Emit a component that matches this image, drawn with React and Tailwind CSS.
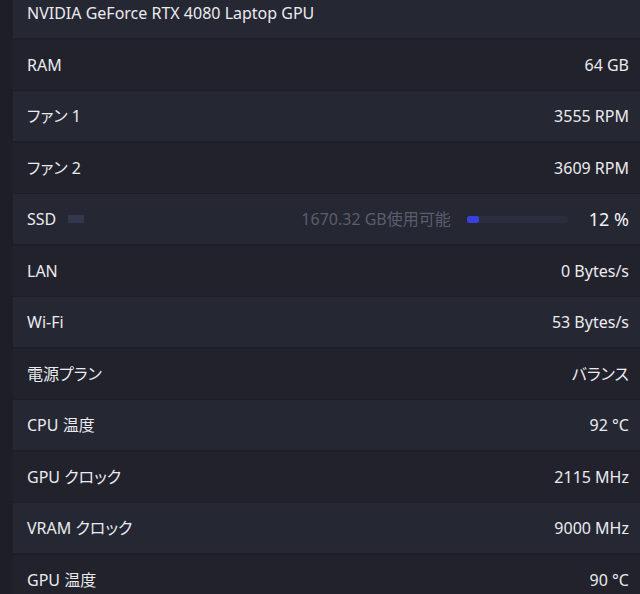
import React from 'react';

const ROWS = [
  { label: 'NVIDIA GeForce RTX 4080 Laptop GPU', value: '' },
  { label: 'RAM', value: '64 GB' },
  { label: 'ファン 1', value: '3555 RPM' },
  { label: 'ファン 2', value: '3609 RPM' },
  { label: 'SSD', ssd: true },
  { label: 'LAN', value: '0 Bytes/s' },
  { label: 'Wi-Fi', value: '53 Bytes/s' },
  { label: '電源プラン', value: 'バランス' },
  { label: 'CPU 温度', value: '92 °C' },
  { label: 'GPU クロック', value: '2115 MHz' },
  { label: 'VRAM クロック', value: '9000 MHz' },
  { label: 'GPU 温度', value: '90 °C' },
];

function SsdRight() {
  const used = 12;
  return (
    <div className="flex items-center">
      <span className="text-[#5b5e6c]">1670.32 GB使用可能</span>
      <div className="ml-4 h-[7px] w-[101px] rounded-[2px] bg-[#2b2e3e] overflow-hidden">
        <div className="h-full rounded-[2px] bg-[#3a40e0]" style={{ width: `${used}%` }} />
      </div>
      <span className="ml-[21px] text-[18px] text-[#f2f2f5]">{used} %</span>
    </div>
  );
}

export default function App() {
  return (
    <div
      className="h-[594px] w-[640px] overflow-hidden bg-[#1d1e26] pl-[13px] text-[16px] text-[#ebebef] [font-feature-settings:'palt']"
      style={{ fontFamily: '"Noto Sans", "Noto Sans CJK JP", sans-serif' }}
    >
      <div className="-mt-[12px] flex flex-col gap-[1.5px]">
        {ROWS.map((row, i) => (
          <div
            key={row.label}
            className={`flex h-[50px] shrink-0 items-center justify-between pl-[14px] pr-[11px] ${
              i % 2 === 0 ? 'bg-[#252733]' : 'bg-[#21222c]'
            }`}
          >
            <div className="flex items-center">
              <span>{row.label}</span>
              {row.ssd && <span className="ml-[12px] h-[8px] w-[16px] bg-[#32374d]" />}
            </div>
            {row.ssd ? <SsdRight /> : <span>{row.value}</span>}
          </div>
        ))}
      </div>
    </div>
  );
}
